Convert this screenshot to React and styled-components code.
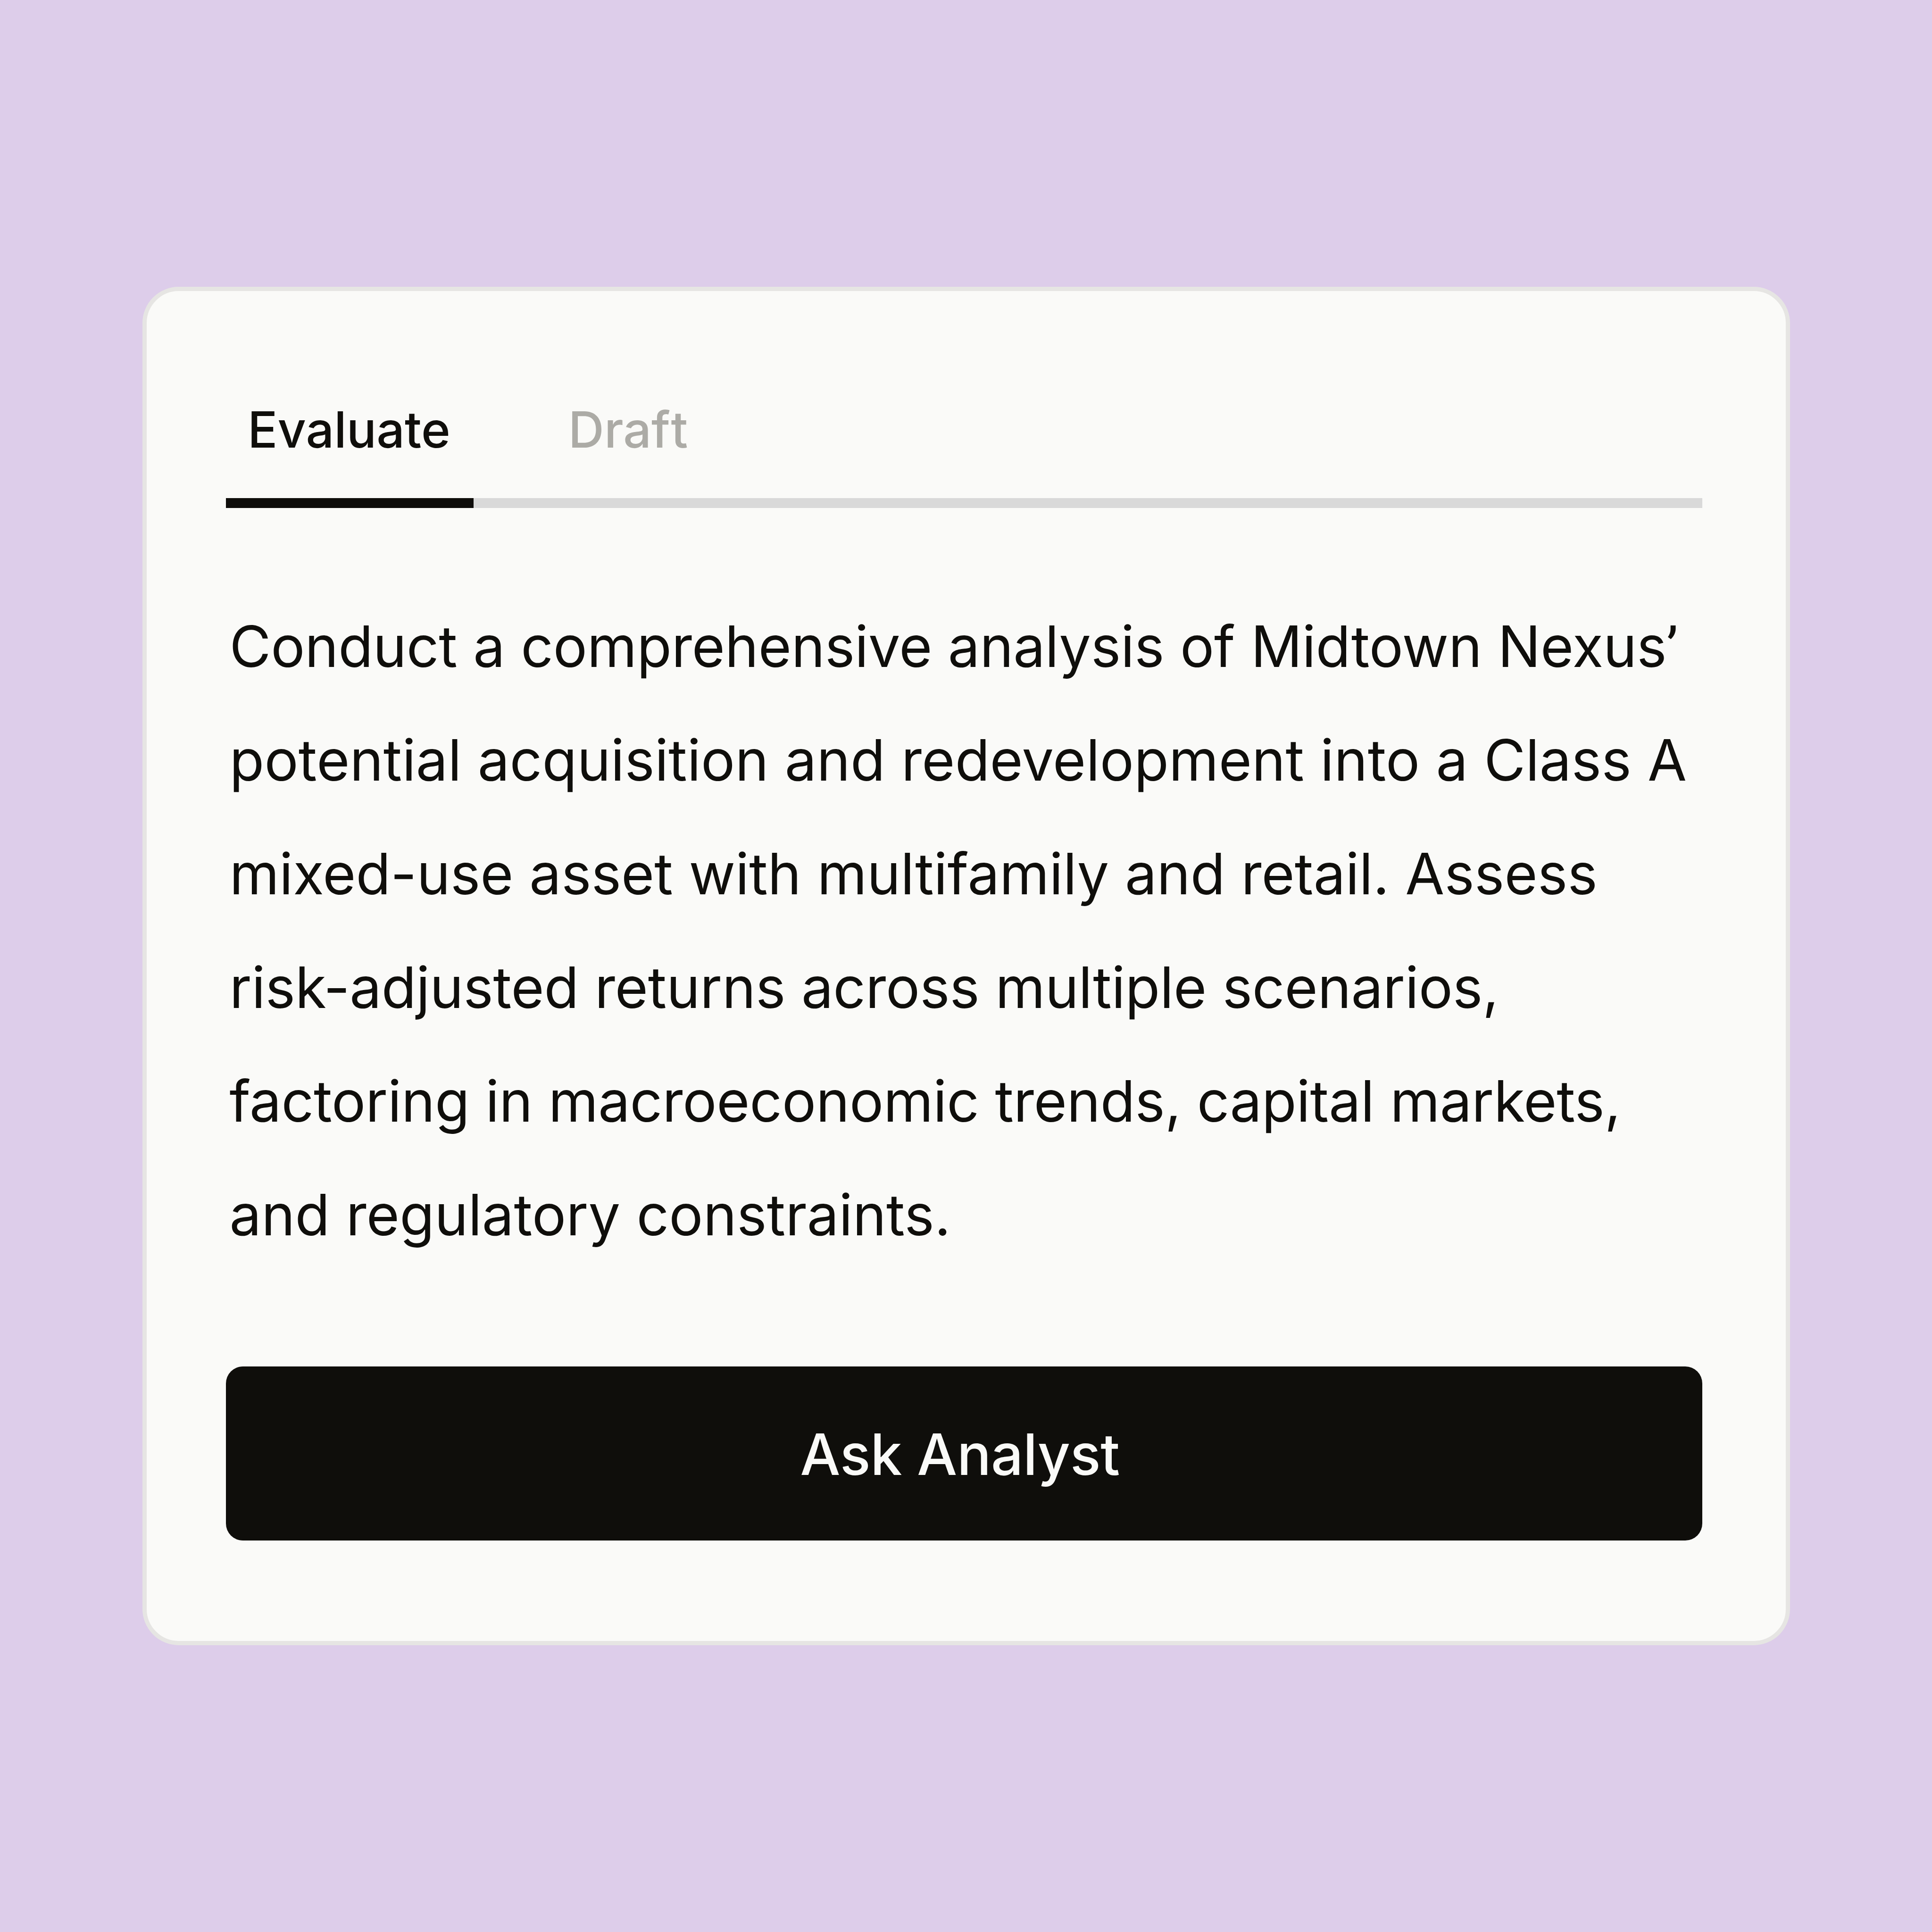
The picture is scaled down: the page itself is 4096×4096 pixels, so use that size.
import styled, {createGlobalStyle} from "styled-components"

const COLORS = {
    LAVENDER: "#ddcdea",
    PAPER: "#fafaf8",
    BORDER: "#e6e5e3",
    INK: "#0f0e0b",
    MUTED: "#acaba6",
    TRACK: "#d9d9d9",
}

// spacing is the letter spacing of the line in px
const LINES = [
    {text: "Conduct a comprehensive analysis of Midtown Nexus", spacing: -0.23, quote: true},
    {text: "potential acquisition and redevelopment into a Class A", spacing: 0.14},
    {text: "mixed-use asset with multifamily and retail. Assess", spacing: -0.03},
    {text: "risk-adjusted returns across multiple scenarios,", spacing: -0.24},
    {text: "factoring in macroeconomic trends, capital markets,", spacing: -0.22},
    {text: "and regulatory constraints.", spacing: 0.11},
]

export default function App() {
    return (
        <Page>
            <GlobalStyle/>
            <Card>
                <TabBar>
                    <Tab $active>Evaluate</Tab>
                    <Tab>Dra<Loose>f</Loose>t</Tab>
                </TabBar>
                <Prompt>
                    {LINES.map(({text, spacing, quote}) => (
                        <Line key={text} $spacing={spacing}>{text}{quote && <Quote>’</Quote>}</Line>
                    ))}
                </Prompt>
                <AskButton>Ask Analyst</AskButton>
            </Card>
        </Page>
    )
}

const GlobalStyle = createGlobalStyle`
  body {
    margin: 0;
    background: ${COLORS.LAVENDER};
    font-family: Inter, sans-serif;
  }
`

const Page = styled.main`
  display: flex;
  align-items: center;
  justify-content: center;
  box-sizing: border-box;
  width: 4096px;
  height: 4096px;
  padding-left: 1px;
`

const Card = styled.section`
  display: flex;
  flex-direction: column;
  box-sizing: border-box;
  width: 3493px;
  height: 2880px;
  padding: 230px 177px 0 168px;

  background-color: ${COLORS.PAPER};
  border: 9px solid ${COLORS.BORDER};
  border-radius: 77px;
`

const TabBar = styled.nav`
  display: flex;
  gap: 155px;
  border-bottom: 21px solid ${COLORS.TRACK};
`

const Tab = styled.div`
  padding: 0 49px 81px 46px;
  /* pulls the active line over the grey track */
  margin-bottom: -21px;
  border-bottom: 21px solid ${({ $active }) => $active ? COLORS.INK : "transparent"};

  color: ${({ $active }) => $active ? COLORS.INK : COLORS.MUTED};
  font-size: 105.4px;
  font-weight: 500;
  line-height: 128px;
`

const Loose = styled.span`
  letter-spacing: 1.5px;
`

const Prompt = styled.p`
  margin: 173.4px 0 201px 7.5px;

  color: ${COLORS.INK};
  font-size: 120.47px;
  line-height: 240.94px;
  white-space: nowrap;
`

const Line = styled.span`
  display: block;
  letter-spacing: ${({ $spacing }) => $spacing}px;
`

// Roboto has the curved apostrophe
const Quote = styled.span`
  font-family: Roboto, sans-serif;
  line-height: 0;
  vertical-align: -3px;
`

const AskButton = styled.button`
  height: 369px;
  padding: 2px 18px 0 0;
  border: none;
  border-radius: 36px;

  background-color: ${COLORS.INK};
  color: ${COLORS.PAPER};
  font-family: inherit;
  font-size: 120.47px;
  font-weight: 500;
  letter-spacing: -0.4px;
`
